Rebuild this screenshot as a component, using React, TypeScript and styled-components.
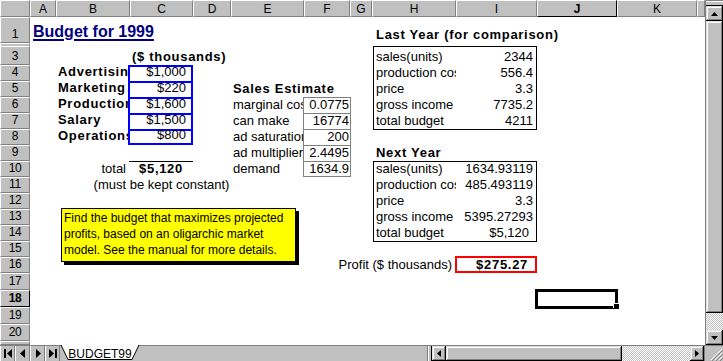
import React from "react";
import styled, { createGlobalStyle, css } from "styled-components";

const GlobalStyle = createGlobalStyle`
  html, body { margin: 0; padding: 0; }
  body { background: #c0c0c0; font-family: "Liberation Sans", Arial, sans-serif; }
  * { box-sizing: border-box; }
`;

const COLS = ["A", "B", "C", "D", "E", "F", "G", "H", "I", "J", "K", "L"];
const COL_W = [26, 74, 63, 38, 73, 46, 22, 84, 81, 80, 80, 8];
// rows 1..21 : row 2 is hidden, row 21 is cut by the tab bar
const ROW_H = [26, 3, 19, 16, 16, 16, 16, 16, 16, 16, 16, 16, 16, 16, 16, 16, 17, 17, 17, 17, 4];

const col = (letter: string) => COLS.indexOf(letter) + 2;
const row = (n: number) => n + 1;

const budget = [
  ["Advertising", "$1,000"],
  ["Marketing", "$220"],
  ["Production", "$1,600"],
  ["Salary", "$1,500"],
  ["Operations", "$800"],
];

const estimate = [
  ["marginal cost", "0.0775"],
  ["can make", "16774"],
  ["ad saturation", "200"],
  ["ad multiplier", "2.4495"],
  ["demand", "1634.9"],
];

const lastYear = [
  ["sales(units)", "2344"],
  ["production cost", "556.4"],
  ["price", "3.3"],
  ["gross income", "7735.2"],
  ["total budget", "4211"],
];

const nextYear = [
  ["sales(units)", "1634.93119"],
  ["production cost", "485.493119"],
  ["price", "3.3"],
  ["gross income", "5395.27293"],
  ["total budget", "$5,120"],
];

const raised = css`
  background: #c0c0c0;
  box-shadow: inset -1px -1px #000, inset 1px 1px #dfdfdf, inset -2px -2px #808080, inset 2px 2px #fff;
`;

const dither = css`
  background-image: repeating-conic-gradient(#c0c0c0 0% 25%, #ffffff 0% 50%);
  background-size: 2px 2px;
`;

const Window = styled.div`
  width: 723px;
  height: 361px;
  display: flex;
  flex-direction: column;
  background: #c0c0c0;
  overflow: hidden;
`;

const Workspace = styled.div`
  display: flex;
  height: 345px;
`;

const Sheet = styled.div`
  display: grid;
  grid-template-columns: 30px ${COL_W.map((w) => `${w}px`).join(" ")};
  grid-template-rows: 17px ${ROW_H.map((h) => `${h}px`).join(" ")};
  width: 705px;
  height: 345px;
  overflow: hidden;
  background: #fff;
  font-family: "Liberation Sans", Arial, sans-serif;
  font-size: 13px;
  color: #000;
`;

const Corner = styled.div`
  grid-row: 1;
  grid-column: 1;
  background: #c0c0c0;
  border-top: 1px solid #fff;
  border-left: 1px solid #fff;
  border-right: 1px solid #808080;
  border-bottom: 1px solid #808080;
`;

const ColHead = styled.div<{ $col: number; $active?: boolean }>`
  grid-row: 1;
  grid-column: ${(p) => p.$col};
  display: flex;
  align-items: center;
  justify-content: center;
  overflow: hidden;
  background: #c0c0c0;
  border-top: 1px solid #fff;
  border-left: 1px solid #fff;
  border-right: 1px solid ${(p) => (p.$active ? "#000" : "#808080")};
  border-bottom: 1px solid ${(p) => (p.$active ? "#000" : "#808080")};
  font-size: 12px;
  line-height: 12px;
  font-weight: ${(p) => (p.$active ? 700 : 400)};
`;

const RowHead = styled.div<{ $row: number; $active?: boolean }>`
  grid-column: 1;
  grid-row: ${(p) => p.$row};
  display: flex;
  align-items: flex-end;
  justify-content: center;
  overflow: hidden;
  padding-bottom: 2px;
  background: #c0c0c0;
  border-top: 1px solid #fff;
  border-left: 1px solid #fff;
  border-right: 1px solid ${(p) => (p.$active ? "#000" : "#808080")};
  border-bottom: 1px solid ${(p) => (p.$active ? "#000" : "#808080")};
  font-size: 12px;
  line-height: 12px;
  letter-spacing: -0.3px;
  font-weight: ${(p) => (p.$active ? 700 : 400)};
`;

type Align = "left" | "right" | "center";

const Cell = styled.div<{
  $col: number;
  $row: number;
  $align?: Align;
  $clip?: boolean;
  $bold?: boolean;
  $pl?: number;
  $pr?: number;
  $pb?: number;
}>`
  grid-column: ${(p) => p.$col};
  grid-row: ${(p) => p.$row};
  display: flex;
  align-items: flex-end;
  justify-content: ${(p) =>
    p.$align === "right" ? "flex-end" : p.$align === "center" ? "center" : "flex-start"};
  min-width: 0;
  padding: 0 ${(p) => p.$pr ?? 2}px ${(p) => p.$pb ?? 2}px ${(p) => p.$pl ?? 2}px;
  overflow: ${(p) => (p.$clip ? "hidden" : "visible")};
  white-space: nowrap;
  line-height: 13px;
  font-weight: ${(p) => (p.$bold ? 700 : 400)};
  letter-spacing: ${(p) => (p.$bold ? "0.7px" : "normal")};
`;

const TitleText = styled.span`
  font-size: 16px;
  line-height: 16px;
  font-weight: 700;
  letter-spacing: 0;
  color: #000080;
  text-decoration: underline;
  text-decoration-thickness: 2px;
  text-underline-offset: 2px;
`;

const BudgetInput = styled(Cell)<{ $last?: boolean }>`
  margin-left: -2px;
  border: 2px solid #0000ff;
  border-bottom-width: ${(p) => (p.$last ? 2 : 0)}px;
`;

const EstimateValue = styled(Cell)<{ $last?: boolean }>`
  margin: 0 -1px 0 -1px;
  border: 1px solid #808080;
  border-bottom-width: ${(p) => (p.$last ? 1 : 0)}px;
`;

const TotalCell = styled(Cell)`
  margin-left: -1px;
  border-top: 1px solid #000;
`;

const ProfitCell = styled(Cell)`
  margin: -1px 0 0 -1px;
  border: 2px solid #ff0000;
`;

const RangeFrame = styled.div<{ $col: number; $span: number; $row: number; $rows: number }>`
  grid-column: ${(p) => p.$col} / span ${(p) => p.$span};
  grid-row: ${(p) => p.$row} / span ${(p) => p.$rows};
  margin: 0 0 -1px 1px;
  border: 1px solid #000;
  pointer-events: none;
`;

const ActiveCell = styled.div`
  grid-column: ${col("J")};
  grid-row: ${row(18)};
  position: relative;
  margin: -1px -1px -2px -2px;
  border: 3px solid #000;
`;

const FillHandle = styled.div`
  position: absolute;
  left: 76px;
  top: 12px;
  width: 5px;
  height: 5px;
  background: #000;
  box-shadow: -1px -1px 0 #fff;
`;

const Note = styled.div`
  grid-column: ${col("B")} / span 5;
  grid-row: ${row(13)} / span 4;
  justify-self: start;
  align-self: start;
  position: relative;
  z-index: 1;
  width: 235px;
  height: 54px;
  margin: -1px 0 0 5px;
  padding: 1px 2px 0 2px;
  background: #ffff00;
  border: 1px solid #000;
  box-shadow: 3px 3px 0 #000;
  font-size: 12px;
  line-height: 16px;
`;

/* scroll bars */

const VScroll = styled.div`
  width: 18px;
  display: flex;
  flex-direction: column;
  border-left: 1px solid #808080;
  background: #c0c0c0;
`;

const SplitH = styled.div`
  height: 6px;
  border-top: 1px solid #808080;
  border-bottom: 1px solid #000;
  box-shadow: inset 0 1px #fff;
`;

const ArrowButton = styled.div<{ $w?: number }>`
  ${raised};
  width: ${(p) => (p.$w ? `${p.$w}px` : "auto")};
  height: 15px;
  flex-shrink: 0;
  display: flex;
  align-items: center;
  justify-content: center;
`;

const VThumb = styled.div`
  ${raised};
  flex: 1;
`;

const VTrack = styled.div`
  ${dither};
  height: 17px;
`;

const TabBar = styled.div`
  display: flex;
  height: 16px;
  border-top: 1px solid #808080;
  background: #c0c0c0;
`;

const NavGroup = styled.div`
  display: flex;
  width: 60px;
`;

const NavButton = styled.div`
  width: 15px;
  height: 15px;
  display: flex;
  align-items: center;
  justify-content: center;
  border-left: 1px solid #fff;
  border-right: 1px solid #808080;
`;

const SheetTab = styled.div`
  position: relative;
  width: 80px;
  height: 16px;
  margin-top: -1px;
  display: flex;
  align-items: center;
  justify-content: center;
  font-size: 12px;
  color: #000;
`;

const TabShape = styled.svg`
  position: absolute;
  left: 0;
  top: 0;
`;

const TabLabel = styled.span`
  position: relative;
  text-decoration: underline;
  padding-top: 1px;
`;

const TabFiller = styled.div`
  flex: 1;
`;

const SplitV = styled.div`
  width: 5px;
  border-left: 1px solid #808080;
  border-right: 1px solid #000;
  box-shadow: inset 1px 0 #fff;
`;

const HThumb = styled.div`
  ${raised};
  width: 176px;
  height: 15px;
`;

const HTrack = styled.div`
  ${dither};
  width: 68px;
  height: 15px;
`;

const SizeCorner = styled.div`
  width: 19px;
  height: 15px;
  border-left: 1px solid #808080;
  display: flex;
  align-items: flex-end;
  justify-content: flex-end;
`;

const Triangle = ({ dir }: { dir: "up" | "down" | "left" | "right" }) => {
  const vertical = dir === "up" || dir === "down";
  const pts = {
    up: "0,4 7,4 3.5,0",
    down: "0,0 7,0 3.5,4",
    left: "4,0 4,7 0,3.5",
    right: "0,0 0,7 4,3.5",
  }[dir];
  return (
    <svg width={vertical ? 7 : 4} height={vertical ? 4 : 7} viewBox={vertical ? "0 0 7 4" : "0 0 4 7"}>
      <polygon points={pts} fill="#000" />
    </svg>
  );
};

const NavGlyph = ({ dir }: { dir: "first" | "prev" | "next" | "last" }) => (
  <svg width="8" height="9" viewBox="0 0 8 9">
    {dir === "first" && (
      <>
        <rect x="0" y="0" width="2" height="9" fill="#000" />
        <polygon points="8,0 8,9 3,4.5" fill="#000" />
      </>
    )}
    {dir === "prev" && <polygon points="6,0 6,9 1,4.5" fill="#000" />}
    {dir === "next" && <polygon points="2,0 2,9 7,4.5" fill="#000" />}
    {dir === "last" && (
      <>
        <polygon points="0,0 0,9 5,4.5" fill="#000" />
        <rect x="6" y="0" width="2" height="9" fill="#000" />
      </>
    )}
  </svg>
);

function App() {
  return (
    <>
      <GlobalStyle />
      <Window>
        <Workspace>
          <Sheet>
            <Corner />
            {COLS.map((l, i) => (
              <ColHead key={l} $col={i + 2} $active={l === "J"}>
                {l === "L" ? "" : l}
              </ColHead>
            ))}
            {ROW_H.map((_, i) => {
              const n = i + 1;
              return (
                <RowHead key={n} $row={row(n)} $active={n === 18}>
                  {n === 2 || n === 21 ? "" : n}
                </RowHead>
              );
            })}

            <Cell $col={col("A")} $row={row(1)} $pl={3} $pb={3}>
              <TitleText>Budget for 1999</TitleText>
            </Cell>
            <Cell $col={col("H")} $row={row(1)} $pl={4} $bold>
              Last Year (for comparison)
            </Cell>

            <Cell $col={col("C")} $row={row(3)} $bold>
              ($ thousands)
            </Cell>

            {budget.map(([label, value], i) => (
              <React.Fragment key={label}>
                <Cell $col={col("B")} $row={row(4 + i)} $clip $bold $pb={3}>
                  {label}
                </Cell>
                <BudgetInput
                  $col={col("C")}
                  $row={row(4 + i)}
                  $align="right"
                  $pr={5}
                  $pb={i === budget.length - 1 ? 2 : 3}
                  $last={i === budget.length - 1}
                >
                  {value}
                </BudgetInput>
              </React.Fragment>
            ))}

            <Cell $col={col("E")} $row={row(5)} $bold>
              Sales Estimate
            </Cell>
            {estimate.map(([label, value], i) => (
              <React.Fragment key={label}>
                <Cell $col={col("E")} $row={row(6 + i)} $clip>
                  {label}
                </Cell>
                <EstimateValue
                  $col={col("F")}
                  $row={row(6 + i)}
                  $align="right"
                  $pr={1}
                  $pb={i === estimate.length - 1 ? 1 : 2}
                  $last={i === estimate.length - 1}
                >
                  {value}
                </EstimateValue>
              </React.Fragment>
            ))}

            <RangeFrame $col={col("H")} $span={2} $row={row(3)} $rows={5} />
            {lastYear.map(([label, value], i) => (
              <React.Fragment key={label}>
                <Cell $col={col("H")} $row={row(3 + i)} $clip $pl={4}>
                  {label}
                </Cell>
                <Cell $col={col("I")} $row={row(3 + i)} $align="right" $pr={4}>
                  {value}
                </Cell>
              </React.Fragment>
            ))}

            <Cell $col={col("H")} $row={row(9)} $pl={4} $bold>
              Next Year
            </Cell>
            <RangeFrame $col={col("H")} $span={2} $row={row(10)} $rows={5} />
            {nextYear.map(([label, value], i) => (
              <React.Fragment key={label}>
                <Cell $col={col("H")} $row={row(10 + i)} $clip $pl={4}>
                  {label}
                </Cell>
                <Cell
                  $col={col("I")}
                  $row={row(10 + i)}
                  $align="right"
                  $pr={value.startsWith("$") ? 8 : 4}
                >
                  {value}
                </Cell>
              </React.Fragment>
            ))}

            <Cell $col={col("B")} $row={row(10)} $align="right" $pr={4}>
              total
            </Cell>
            <TotalCell $col={col("C")} $row={row(10)} $align="center" $bold>
              $5,120
            </TotalCell>
            <Cell $col={col("C")} $row={row(11)} $align="center">
              (must be kept constant)
            </Cell>

            <Note>
              Find the budget that maximizes projected profits, based on an oligarchic market model.
              See the manual for more details.
            </Note>

            <Cell $col={col("H")} $row={row(16)} $align="right" $pr={4}>
              Profit ($ thousands)
            </Cell>
            <ProfitCell $col={col("I")} $row={row(16)} $align="right" $bold $pr={7} $pb={0}>
              $275.27
            </ProfitCell>

            <ActiveCell>
              <FillHandle />
            </ActiveCell>
          </Sheet>

          <VScroll>
            <SplitH />
            <ArrowButton>
              <Triangle dir="up" />
            </ArrowButton>
            <VThumb />
            <VTrack />
            <ArrowButton>
              <Triangle dir="down" />
            </ArrowButton>
          </VScroll>
        </Workspace>

        <TabBar>
          <NavGroup>
            <NavButton>
              <NavGlyph dir="first" />
            </NavButton>
            <NavButton>
              <NavGlyph dir="prev" />
            </NavButton>
            <NavButton>
              <NavGlyph dir="next" />
            </NavButton>
            <NavButton>
              <NavGlyph dir="last" />
            </NavButton>
          </NavGroup>
          <SheetTab>
            <TabShape width="80" height="16" viewBox="0 0 80 16">
              <polygon points="1,0 8,14 72,14 79,0" fill="#fff" />
              <polyline points="1,0 8,14.5 72,14.5 79,0" fill="none" stroke="#000" strokeWidth="1" />
            </TabShape>
            <TabLabel>BUDGET99</TabLabel>
          </SheetTab>
          <TabFiller />
          <SplitV />
          <ArrowButton $w={14}>
            <Triangle dir="left" />
          </ArrowButton>
          <HThumb />
          <HTrack />
          <ArrowButton $w={14}>
            <Triangle dir="right" />
          </ArrowButton>
          <SizeCorner>
            <svg width="13" height="13" viewBox="0 0 13 13">
              <path d="M12 1 L1 12 M12 5 L5 12 M12 9 L9 12" stroke="#fff" strokeWidth="1" />
              <path d="M13 2 L2 13 M13 6 L6 13 M13 10 L10 13" stroke="#808080" strokeWidth="1" />
            </svg>
          </SizeCorner>
        </TabBar>
      </Window>
    </>
  );
}

export default App;
